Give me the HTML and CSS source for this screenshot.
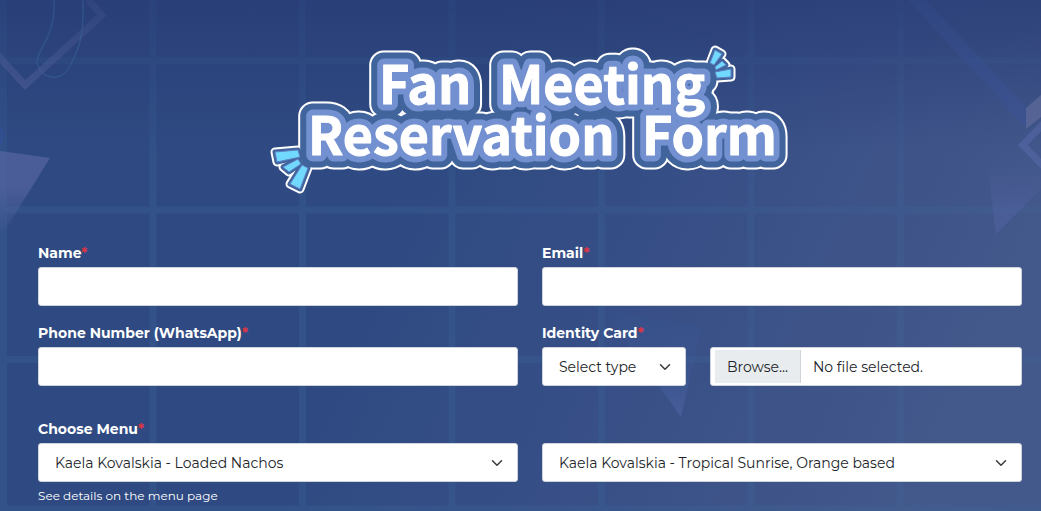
FILE: index.html
```html
<!DOCTYPE html>
<html lang="en">
<head>
    <meta charset="UTF-8" />
    <meta name="viewport" content="width=device-width, initial-scale=1.0" />
    <title>Fan Meeting Reservation Form</title>
    <link rel="stylesheet" href="styles.css">
</head>
<body>
    <svg class="backdrop" viewBox="0 0 1041 511" preserveAspectRatio="xMidYMin slice" aria-hidden="true">
        <defs>
            <pattern id="grid" x="-1" y="56" width="149.5" height="149.5" patternUnits="userSpaceOnUse">
                <path d="M4.500 0V149.500M0 4.500H149.500" fill="none" stroke="#3d70a0" stroke-width="7" />
            </pattern>
            <linearGradient id="gridFade" gradientUnits="userSpaceOnUse" x1="0" y1="0" x2="0" y2="220">
                <stop offset="0" stop-color="#fff" stop-opacity="0.08" />
                <stop offset="1" stop-color="#fff" stop-opacity="0.23" />
            </linearGradient>
            <linearGradient id="gridSide" x1="0" y1="0" x2="1" y2="0">
                <stop offset="0.3" stop-color="#000" stop-opacity="0" />
                <stop offset="1" stop-color="#000" stop-opacity="0.3" />
            </linearGradient>
            <mask id="gridMask">
                <rect width="1041" height="511" fill="url(#gridFade)" />
                <rect width="1041" height="511" fill="url(#gridSide)" />
            </mask>
            <linearGradient id="fadeDown" x1="0" y1="0" x2="0" y2="1">
                <stop offset="0.4" stop-color="#5c69a6" stop-opacity="0.6" />
                <stop offset="1" stop-color="#5c69a6" stop-opacity="0" />
            </linearGradient>
            <linearGradient id="fadeUp" x1="0" y1="0" x2="0" y2="1">
                <stop offset="0.2" stop-color="#5664a6" stop-opacity="0" />
                <stop offset="0.8" stop-color="#5664a6" stop-opacity="0.45" />
            </linearGradient>
            <linearGradient id="star" x1="0" y1="0" x2="0" y2="1">
                <stop offset="0" stop-color="#34508a" stop-opacity="0.5" />
                <stop offset="0.5" stop-color="#3e5a98" stop-opacity="0.3" />
                <stop offset="1" stop-color="#4f65a6" stop-opacity="0.6" />
            </linearGradient>
            <linearGradient id="beam" x1="0" y1="0" x2="0" y2="1">
                <stop offset="0" stop-color="#38539a" stop-opacity="0.2" />
                <stop offset="1" stop-color="#38539a" stop-opacity="0.4" />
            </linearGradient>
            <linearGradient id="corner" gradientUnits="userSpaceOnUse" x1="0" y1="0" x2="0" y2="90">
                <stop offset="0" stop-color="#6a70a8" stop-opacity="0.1" />
                <stop offset="1" stop-color="#6a70a8" stop-opacity="0.3" />
            </linearGradient>
        </defs>
        <rect width="1041" height="511" fill="url(#grid)" mask="url(#gridMask)" />
        <path d="M-8 49L25 85L102 15L88 0" fill="none" stroke="url(#corner)" stroke-width="7" />
        <path d="M54 0C56 38 36 50 37 63C42 80 61 83 70 66C79 48 84 38 83 0" fill="none" stroke="#376399" stroke-opacity="0.5" stroke-width="1.500" />
        <path d="M0 151L50 158L0 238Z" fill="url(#fadeDown)" />
        <path d="M0 128Q5 136 0 144" fill="none" stroke="#3450a8" stroke-width="1" />
        <path d="M908 0H926L1026 107V128Z" fill="url(#beam)" />
        <path d="M1026 108L1041 95V117L1026 129Z" fill="#66709f" fill-opacity="0.6" />
        <path d="M1048 119L1023 145L1048 171" fill="none" stroke="#5668a6" stroke-opacity="0.6" stroke-width="7" />
        <path d="M985 145L1041 150V189L996 234Z" fill="url(#fadeUp)" />
        <path d="M604 310L702 326L681 417Z" fill="url(#star)" />
    </svg>

    <main class="page">
        <h1 class="title">
            <svg viewBox="0 0 540 160" role="img" aria-label="Fan Meeting Reservation Form">
                <defs>
                    <g id="letters">
                        <text x="119" y="64">Fan</text>
                        <text x="239" y="64">Meeting</text>
                        <text x="48" y="115">Reservation</text>
                        <text x="382" y="115">Form</text>
                    </g>
                    <g id="rays">
                        <path d="M15 112L38 110L40 117L17 122Z" />
                        <path d="M23 127L38 119L41 124L29 132Z" />
                        <path d="M30 144L42 125L48 128L40 149Z" />
                        <path d="M455 10L462 14L454 25L450 23Z" />
                        <path d="M455 27L462 21L466 25L456 30Z" />
                        <path d="M455 32L471 29V37L457 38Z" />
                    </g>
                </defs>
                <use href="#letters" class="edge" />
                <use href="#rays" class="ray-edge" />
                <use href="#letters" class="outer" />
                <use href="#rays" class="ray-outer" />
                <use href="#letters" class="inner" />
                <use href="#rays" class="ray" />
                <use href="#letters" class="face" />
            </svg>
        </h1>

        <form class="form">
            <div class="field">
                <label for="name">Name<span class="required">*</span></label>
                <input type="text" id="name" class="control" required />
            </div>
            <div class="field">
                <label for="email">Email<span class="required">*</span></label>
                <input type="email" id="email" class="control" required />
            </div>
            <div class="field">
                <label for="phone">Phone Number (WhatsApp)<span class="required">*</span></label>
                <input type="tel" id="phone" class="control" required />
            </div>
            <div class="field">
                <label for="idType">Identity Card<span class="required">*</span></label>
                <div class="identity">
                    <div class="select">
                        <select id="idType" class="control" required>
                            <option>Select type</option>
                        </select>
                        <svg class="chevron" viewBox="0 0 16 16"><path d="M2 5l6 6 6-6" /></svg>
                    </div>
                    <div class="file control">
                        <label for="idFile"><span class="browse">Browse...</span><span class="filename">No file selected.</span></label>
                        <input type="file" id="idFile" required />
                    </div>
                </div>
            </div>
            <div class="field menu">
                <label for="food">Choose Menu<span class="required">*</span></label>
                <div class="select">
                    <select id="food" class="control">
                        <option>Kaela Kovalskia - Loaded Nachos</option>
                    </select>
                    <svg class="chevron" viewBox="0 0 16 16"><path d="M2 5l6 6 6-6" /></svg>
                </div>
                <small>See details on the menu page</small>
            </div>
            <div class="field menu drink">
                <div class="select">
                    <select id="drink" class="control" aria-label="Drink">
                        <option>Kaela Kovalskia - Tropical Sunrise, Orange based</option>
                    </select>
                    <svg class="chevron" viewBox="0 0 16 16"><path d="M2 5l6 6 6-6" /></svg>
                </div>
            </div>
        </form>
    </main>
</body>
</html>
```

FILE: styles.css
```css
* {
    margin: 0;
    padding: 0;
    box-sizing: border-box;
}

body {
    position: relative;
    min-height: 100vh;
    overflow-x: hidden;
    font-family: Montserrat, Inter, sans-serif;
    font-size: 14px;
    color: #ffffff;
    background: linear-gradient(180deg, rgba(39, 58, 116, 0.7), rgba(39, 58, 116, 0) 150px),
        linear-gradient(115deg, #2f4a82 40%, #364e86 58%, #43588b 90%);
}

.backdrop {
    position: absolute;
    top: 0;
    left: 0;
    width: 100%;
    height: 100%;
}

.page {
    position: relative;
    padding: 40px 19px 0 38px;
}

/* Title lettering */
.title svg {
    display: block;
    width: 100%;
    max-width: 540px;
    margin: 0 auto;
    font-family: "Noto Sans CJK JP", sans-serif;
    font-size: 52px;
    font-weight: 700;
    stroke-linejoin: round;
}

.edge {
    fill: #ffffff;
    stroke: #ffffff;
    stroke-width: 29px;
}

.outer {
    fill: #40649b;
    stroke: #40649b;
    stroke-width: 25px;
}

.inner {
    fill: #7390d0;
    stroke: #7390d0;
    stroke-width: 13px;
}

.face {
    fill: #ffffff;
    stroke: #ffffff;
    stroke-width: 1px;
}

.ray-edge {
    fill: #ffffff;
    stroke: #ffffff;
    stroke-width: 9px;
}

.ray-outer {
    fill: #40649b;
    stroke: #40649b;
    stroke-width: 5px;
}

.ray {
    fill: #70d9fd;
    stroke: #5f80c4;
    stroke-width: 1px;
}

/* Form */
.form {
    display: grid;
    grid-template-columns: 1fr 1fr;
    gap: 15px 24px;
    margin-top: 41px;
}

.field > label {
    display: block;
    margin-bottom: 2px;
    line-height: 24px;
    font-weight: 700;
}

.required {
    color: #dc3545;
}

.control {
    display: block;
    width: 100%;
    height: 39px;
    padding: 0 16px;
    border: 1px solid #ced4da;
    border-radius: 3px;
    background: #ffffff;
    color: #212529;
    font-family: inherit;
    font-size: 14px;
}

.select {
    position: relative;
}

select.control {
    appearance: none;
    padding-right: 36px;
}

.chevron {
    position: absolute;
    top: 14px;
    right: 15px;
    width: 12px;
    height: 12px;
    fill: none;
    stroke: #343a40;
    stroke-width: 2px;
    stroke-linecap: round;
    stroke-linejoin: round;
    pointer-events: none;
}

.identity {
    display: grid;
    grid-template-columns: 3fr 6.5fr;
    gap: 24px;
}

.file {
    position: relative;
    padding: 2px 4px;
}

.file label {
    display: flex;
    height: 33px;
    line-height: 35px;
}

.browse {
    padding: 0 12px;
    border-right: 1px solid #ced4da;
    background: #e9ecef;
}

.filename {
    padding-left: 12px;
}

.file input {
    position: absolute;
    top: 0;
    left: 0;
    width: 100%;
    height: 100%;
    opacity: 0;
}

.menu {
    margin-top: 16px;
}

.drink {
    padding-top: 26px;
}

small {
    display: block;
    margin-top: 4px;
    line-height: 20px;
    font-size: 12px;
}
```
